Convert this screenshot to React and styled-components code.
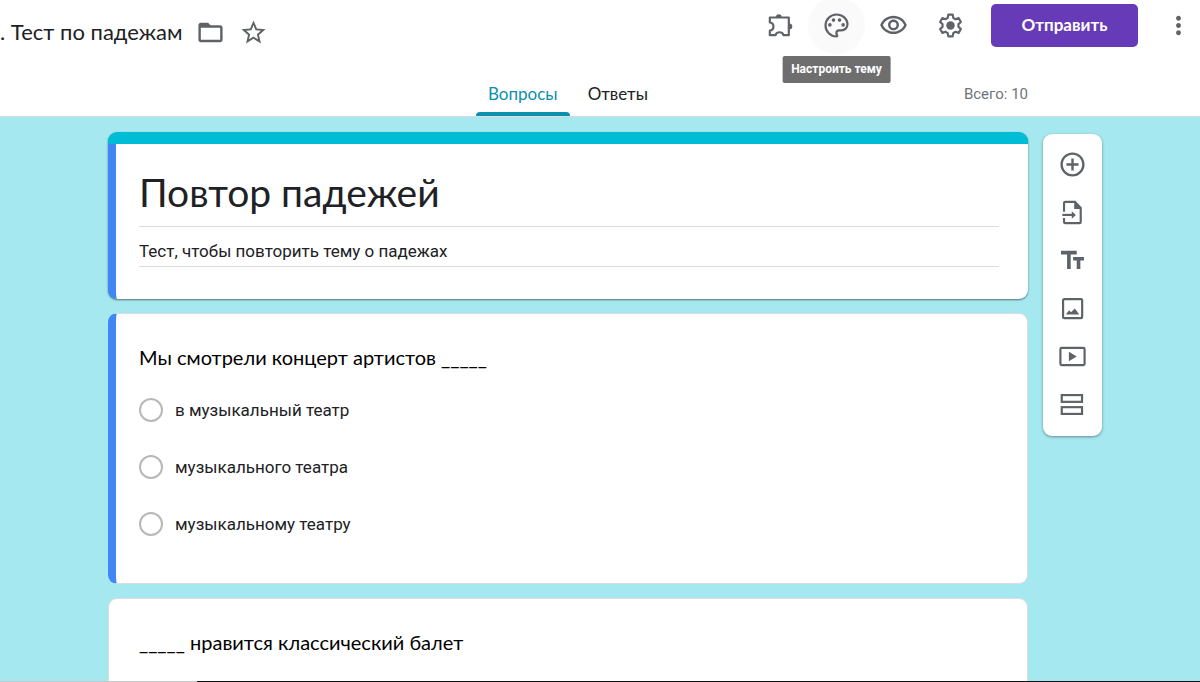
import React from "react";
import styled, { createGlobalStyle, css } from "styled-components";
import {
  MdAddCircleOutline,
  MdFolderOpen,
  MdMoreVert,
  MdOutlineVisibility,
  MdStarBorder,
  MdTextFields,
} from "react-icons/md";

const display = `Lato, "Open Sans", sans-serif`;
const body = `Roboto, "Liberation Sans", sans-serif`;

const GlobalStyle = createGlobalStyle`
  * {
    box-sizing: border-box;
  }
  body {
    margin: 0;
    font-family: ${body};
    color: #202124;
  }
  button, input {
    font-family: inherit;
    color: inherit;
  }
`;

const Page = styled.div`
  display: flex;
  flex-direction: column;
  height: 100vh;
  background: #a5e8ef;
`;

const Header = styled.header`
  background: #fff;
  border-bottom: 1px solid #dadce0;
  flex: none;
`;

const TopBar = styled.div`
  display: flex;
  align-items: center;
  justify-content: space-between;
  height: 50px;
`;

const TitleGroup = styled.div`
  display: flex;
  align-items: center;
  padding-top: 14px;
`;

const DocTitle = styled.input`
  width: 189px;
  padding: 0;
  border: 0;
  outline: 0;
  background: none;
  font-family: ${display};
  font-size: 22px;
  line-height: 28px;
`;

const iconButton = css`
  display: flex;
  align-items: center;
  justify-content: center;
  flex: none;
  padding: 0;
  border: 0;
  background: none;
  color: #5f6368;
  cursor: pointer;
  svg {
    width: 29px;
    height: 29px;
  }
`;

const SmallButton = styled.button`
  ${iconButton}
  width: 43px;
  height: 36px;
`;

const Actions = styled.div`
  display: flex;
  align-items: center;
`;

const RoundButton = styled.button`
  ${iconButton}
  position: relative;
  width: 57px;
  height: 57px;
  border-radius: 50%;
  background: ${(props) => (props.$active ? "#fafafa" : "none")};
`;

const MoreButton = styled.button`
  ${iconButton}
  width: 44px;
  height: 44px;
`;

const Tooltip = styled.span`
  position: absolute;
  top: 59px;
  left: 50%;
  transform: translateX(-50%);
  z-index: 2;
  padding: 0 9px;
  border-radius: 2px;
  background: #6e6e6e;
  color: #fff;
  font-size: 12px;
  font-weight: 700;
  line-height: 27px;
  white-space: nowrap;
`;

const SendButton = styled.button`
  width: 147px;
  height: 43px;
  margin: 0 18px 0 12px;
  padding: 0 0 2px;
  border: 0;
  border-radius: 5px;
  background: #673ab7;
  color: #fff;
  font-family: ${display};
  font-size: 17px;
  font-weight: 700;
  cursor: pointer;
`;

const TabBar = styled.div`
  display: grid;
  grid-template-columns: 1fr auto 1fr;
  align-items: end;
  height: 66px;
  padding: 0 172px 0 108px;
`;

const Tabs = styled.nav`
  grid-column: 2;
  display: flex;
  gap: 6px;
`;

const Tab = styled.button`
  padding: 0 12px;
  border: 0;
  background: none;
  color: ${(props) => (props.$active ? "#0b8fac" : "#202124")};
  font-family: ${display};
  font-size: 17px;
  line-height: 24px;
  cursor: pointer;
  &::after {
    content: "";
    display: block;
    height: 4px;
    margin: 6px -12px 0;
    border-radius: 4px 4px 0 0;
    background: ${(props) => (props.$active ? "#0b8fac" : "none")};
  }
`;

const Total = styled.span`
  justify-self: end;
  color: #70757a;
  font-size: 15px;
  line-height: 44px;
`;

const Canvas = styled.main`
  display: flex;
  align-items: flex-start;
  gap: 15px;
  flex: 1;
  min-height: 0;
  padding: 15px 98px 0 108px;
  overflow-y: auto;
  scrollbar-width: none;
`;

const Form = styled.div`
  display: flex;
  flex-direction: column;
  flex: 1;
  gap: 14px;
`;

const Card = styled.section`
  border: 1px solid #dadce0;
  border-left: ${(props) =>
    props.$accent ? "8px solid #4285f4" : "1px solid #dadce0"};
  border-radius: 9px;
  background: #fff;
  padding: 27px 29px 31px ${(props) => (props.$accent ? "23px" : "30px")};
`;

const TitleCard = styled.div`
  border-radius: 9px;
  border-top: 12px solid #00bcd4;
  box-shadow: 0 1px 2px rgba(0, 0, 0, 0.5);
  background: #00bcd4;
`;

const TitleBody = styled.section`
  display: flex;
  flex-direction: column;
  padding: 22px 29px 32px 23px;
  border-left: 8px solid #4285f4;
  border-radius: 0 0 9px 9px;
  background: #fff;
`;

const FormTitle = styled.input`
  height: 61px;
  padding: 0 0 9px;
  border: 0;
  border-bottom: 1px solid #dadce0;
  outline: 0;
  font-family: ${display};
  font-size: 39px;
`;

const Description = styled.input`
  height: 40px;
  padding: 8px 0 0;
  border: 0;
  border-bottom: 1px solid #dadce0;
  outline: 0;
  font-size: 17px;
`;

const Question = styled.h2`
  margin: 0;
  color: #000;
  font-family: ${display};
  font-size: 20px;
  font-weight: 400;
  line-height: 32px;
`;

const Options = styled.div`
  display: flex;
  flex-direction: column;
  padding: 8px 0 0;
`;

const Option = styled.label`
  display: flex;
  align-items: center;
  gap: 12px;
  height: 57px;
  font-size: 17px;
`;

const Radio = styled.input`
  appearance: none;
  width: 24px;
  height: 24px;
  margin: 0;
  border: 2px solid #b8b8b8;
  border-radius: 50%;
  &:checked {
    border-color: #4285f4;
  }
`;

const Toolbar = styled.aside`
  display: flex;
  flex-direction: column;
  align-items: center;
  width: 59px;
  margin-top: 2px;
  padding: 6px 0 8px;
  border-radius: 9px;
  background: #fff;
  box-shadow: 0 1px 3px rgba(0, 0, 0, 0.4);
`;

const ToolButton = styled.button`
  ${iconButton}
  width: 48px;
  height: 48px;
`;

const BottomEdge = styled.div`
  flex: none;
  height: 1px;
  background: linear-gradient(to right, #c8c8c8 197px, #111 197px);
`;

function Outline({ children }) {
  return (
    <svg
      viewBox="0 0 24 24"
      fill="none"
      stroke="currentColor"
      strokeWidth="1.8"
      aria-hidden="true"
    >
      {children}
    </svg>
  );
}

const PuzzleIcon = () => (
  <Outline>
    <path
      strokeLinejoin="round"
      d="M4 5.4H19.7V20H15.2C15 18.5 13.6 17.6 12 17.6S9 18.5 8.8 20H4V16.3C5.7 16.1 7 14.7 7 12.9S5.700 9.700 4 9.500Z"
    />
    <path
      fill="currentColor"
      stroke="none"
      d="M9 5.200a2.400 2.600 0 0 1 4.800 0zM20 10.400a2.600 2.400 0 0 1 0 4.800z"
    />
  </Outline>
);

const PaletteIcon = () => (
  <Outline>
    <path d="M12 21.1C7 21.1 2.9 17 2.9 12S7 2.9 12 2.9s9.1 3.700 9.100 8.100c0 2.800-2.300 5.100-5.100 5.100h-1.800c-1.300 0-2.300 1-2.300 2.300 0 .6.200 1.100.6 1.500.3.400.1 1.200-.5 1.200z" />
    <g fill="currentColor" stroke="none">
      <circle cx="6.5" cy="11.5" r="1.5" />
      <circle cx="9.5" cy="7.5" r="1.5" />
      <circle cx="14.5" cy="7.5" r="1.5" />
      <circle cx="17.5" cy="11.5" r="1.5" />
    </g>
  </Outline>
);

const GearIcon = () => (
  <Outline>
    <path
      strokeLinejoin="round"
      d="M10.2 3h3.600l.5 2.700 1.900 1.100 2.500-.9 1.900 3.200-2 1.800v2.200l2 1.800-1.900 3.200-2.500-.9-1.900 1.100-.5 2.700h-3.600l-.5-2.700-1.900-1.100-2.500.9-1.900-3.200 2-1.800v-2.200l-2-1.800 1.900-3.200 2.500.9 1.900-1.100z"
    />
    <circle cx="12" cy="12" r="3.5" fill="currentColor" stroke="none" />
  </Outline>
);

const ImportIcon = () => (
  <Outline>
    <path d="M5 11.4V4.200c0-.6.400-1 1-1h8l4.800 5V19.800c0 .6-.4 1-1 1H6c-.6 0-1-.4-1-1V16.600" />
    <path d="M3.6 14h9" />
    <path
      fill="currentColor"
      stroke="none"
      d="M11.4 10.900v6.200l3.400-3.100zM13.400 3v6.200h6z"
    />
  </Outline>
);

const ImageIcon = () => (
  <Outline>
    <rect x="4.2" y="4.2" width="15.8" height="15.8" rx="1" />
    <path
      fill="currentColor"
      stroke="none"
      d="M6.5 17 9.200 13.500l1.500 1.600L14 11.900l3.600 5.100z"
    />
  </Outline>
);

const VideoIcon = () => (
  <Outline>
    <rect x="2" y="4.9" width="20" height="14.2" rx="1" />
    <path fill="currentColor" stroke="none" d="M9 8v8l6.500-4z" />
  </Outline>
);

const SectionIcon = () => (
  <Outline>
    <rect x="3.1" y="4.2" width="16.8" height="5.6" />
    <rect x="3.1" y="14.2" width="16.8" height="5.6" />
  </Outline>
);

const tools = [
  { label: "Добавить вопрос", icon: <MdAddCircleOutline /> },
  { label: "Импортировать вопросы", icon: <ImportIcon /> },
  { label: "Добавить название и описание", icon: <MdTextFields /> },
  { label: "Добавить изображение", icon: <ImageIcon /> },
  { label: "Добавить видео", icon: <VideoIcon /> },
  { label: "Добавить раздел", icon: <SectionIcon /> },
];

const options = [
  "в музыкальный театр",
  "музыкального театра",
  "музыкальному театру",
];

export default function App() {
  return (
    <Page>
      <GlobalStyle />
      <Header>
        <TopBar>
          <TitleGroup>
            <DocTitle aria-label="Название" defaultValue=". Тест по падежам" />
            <SmallButton aria-label="Переместить в папку">
              <MdFolderOpen />
            </SmallButton>
            <SmallButton aria-label="Пометить">
              <MdStarBorder />
            </SmallButton>
          </TitleGroup>
          <Actions>
            <RoundButton aria-label="Дополнения">
              <PuzzleIcon />
            </RoundButton>
            <RoundButton $active aria-labelledby="theme-tip">
              <PaletteIcon />
              <Tooltip id="theme-tip">Настроить тему</Tooltip>
            </RoundButton>
            <RoundButton aria-label="Просмотр">
              <MdOutlineVisibility />
            </RoundButton>
            <RoundButton aria-label="Настройки">
              <GearIcon />
            </RoundButton>
            <SendButton>Отправить</SendButton>
            <MoreButton aria-label="Ещё">
              <MdMoreVert />
            </MoreButton>
          </Actions>
        </TopBar>
        <TabBar>
          <Tabs>
            <Tab $active>Вопросы</Tab>
            <Tab>Ответы</Tab>
          </Tabs>
          <Total>Всего: 10</Total>
        </TabBar>
      </Header>
      <Canvas>
        <Form>
          <TitleCard>
            <TitleBody>
              <FormTitle
                aria-label="Название формы"
                defaultValue="Повтор падежей"
              />
              <Description
                aria-label="Описание"
                defaultValue="Тест, чтобы повторить тему о падежах"
              />
            </TitleBody>
          </TitleCard>
          <Card $accent>
            <Question>Мы смотрели концерт артистов _____</Question>
            <Options>
              {options.map((text) => (
                <Option key={text}>
                  <Radio type="radio" name="question-1" />
                  {text}
                </Option>
              ))}
            </Options>
          </Card>
          <Card>
            <Question>_____ нравится классический балет</Question>
          </Card>
        </Form>
        <Toolbar>
          {tools.map((tool) => (
            <ToolButton key={tool.label} aria-label={tool.label}>
              {tool.icon}
            </ToolButton>
          ))}
        </Toolbar>
      </Canvas>
      <BottomEdge />
    </Page>
  );
}
